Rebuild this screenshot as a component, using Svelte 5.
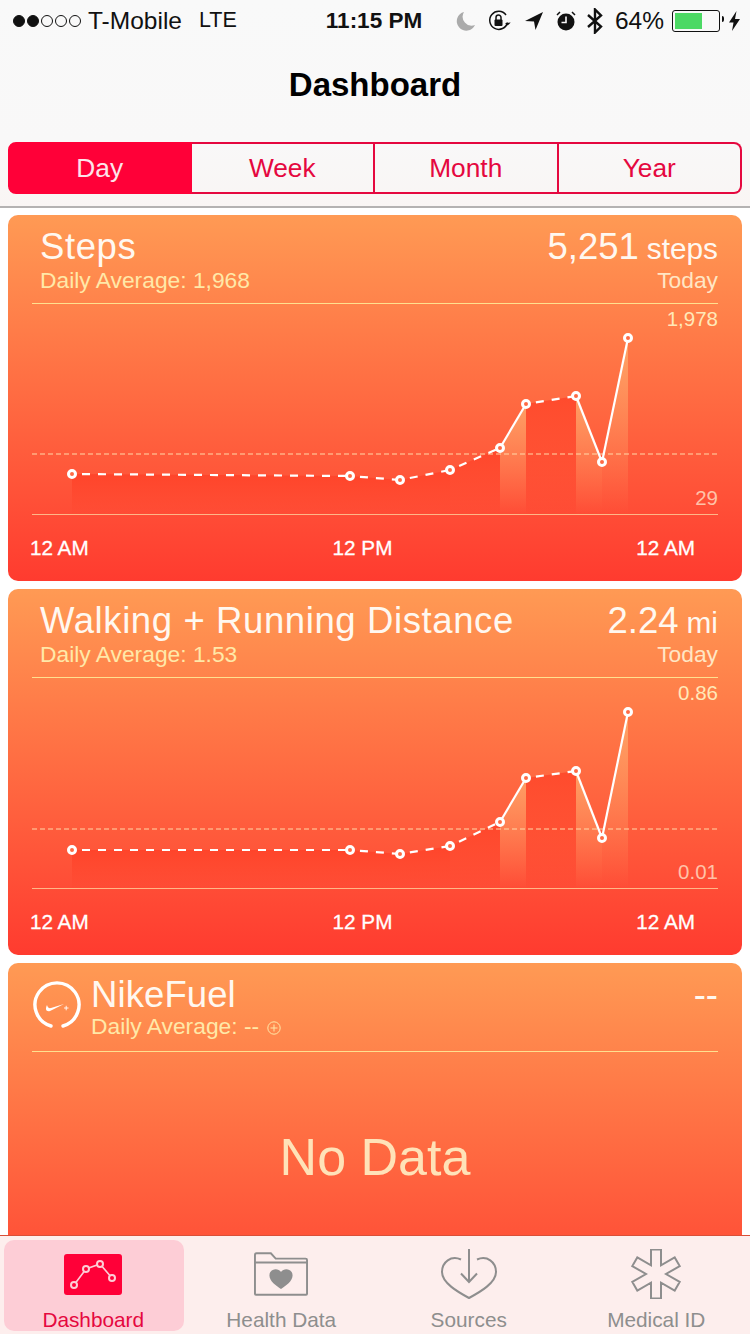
<script>
  const tabs = ['Day', 'Week', 'Month', 'Year']

  const cards = [
    {
      title: 'Steps', avg: '1,968', value: '5,251', unit: 'steps', max: '1,978', min: '29',
      pts: [[40, 171], [318, 173], [368, 177], [418, 167], [468, 145], [494, 101], [544, 93], [570, 159], [596, 35]],
      avgY: 151,
    },
    {
      title: 'Walking + Running Distance', avg: '1.53', value: '2.24', unit: 'mi', max: '0.86', min: '0.01',
      pts: [[40, 173], [318, 173], [368, 177], [418, 169], [468, 145], [494, 101], [544, 94], [570, 161], [596, 35]],
      avgY: 152,
    },
  ]

  // segments drawn with a solid line; the others are dashed
  const solid = [4, 6, 7]
  const base = 211

  const segments = (pts) => pts.slice(0, -1).map((p, i) => ({ a: p, b: pts[i + 1], solid: solid.includes(i) }))
  const area = (s) => `${s.a[0]},${base} ${s.a[0]},${s.a[1]} ${s.b[0]},${s.b[1]} ${s.b[0]},${base}`
</script>

<div class="page">
  <header class="top">
    <div class="status">
      <div class="carrier">
        <span class="dots">
          <i class="on"></i><i class="on"></i><i></i><i></i><i></i>
        </span>
        <span>T-Mobile</span>
        <span class="lte">LTE</span>
      </div>
      <div class="time">11:15 PM</div>
      <div class="sys">
        <svg width="20" height="22" viewBox="0 0 20 22"><path d="M8 2a9.500 9.500 0 1 0 11 13 9 9 0 0 1-11-13z" fill="#ababab" /></svg>
        <svg class="lock" width="24" height="22" viewBox="0 0 24 22" fill="none" stroke="#111" stroke-width="1.500">
          <path d="M19.500 12.500a9 9 0 1 1-1.500-7.500" />
          <path d="M17 13l2.700 2.600 3-3z" fill="#111" stroke="none" />
          <rect x="6.500" y="9.500" width="8" height="6.500" rx="1" fill="#111" stroke="none" />
          <path d="M8 10V7.500a2.500 2.500 0 0 1 5 0V10" />
        </svg>
        <svg class="arrow" width="18" height="19" viewBox="0 0 18 19"><path d="M18 1L0 10l9 .500 1.500 8.500z" fill="#111" /></svg>
        <svg class="alarm" width="20" height="20" viewBox="0 0 20 20">
          <circle cx="10" cy="11" r="8.500" fill="#111" />
          <path d="M10 5.500V11.500H5.500" fill="none" stroke="#f9f8f9" stroke-width="1.600" />
          <path d="M1 4l3-3M19 4l-3-3" stroke="#111" stroke-width="1.500" />
        </svg>
        <svg class="bt" width="16" height="26" viewBox="0 0 16 26" fill="none" stroke="#111" stroke-width="2.400">
          <path d="M1 7l13 11.500L8 24.500V1.500l6 6L1 19" />
        </svg>
        <span class="pct">64%</span>
        <div class="battery"><div class="level"></div></div>
        <svg class="bolt" width="11" height="20" viewBox="0 0 11 20"><path d="M7.500 0L0 11.500h4.500L3 20l8-12H6z" fill="#111" /></svg>
      </div>
    </div>
    <h1>Dashboard</h1>
    <div class="segments">
      {#each tabs as t, i}
        <div class="seg" class:active={i === 0}>{t}</div>
      {/each}
    </div>
  </header>

  <main class="list">
    {#each cards as c}
      <section class="card">
        <div class="head">
          <div class="row">
            <span class="title">{c.title}</span>
            <span class="value">{c.value}<small>{c.unit}</small></span>
          </div>
          <div class="row sub">
            <span>Daily Average: {c.avg}</span>
            <span class="today">Today</span>
          </div>
        </div>
        <div class="chart">
          <svg width="686" height="211" viewBox="0 0 686 211">
            <defs>
              <linearGradient id="lite" x1="0" y1="0" x2="0" y2="1">
                <stop offset="0" stop-color="#ffb070" stop-opacity="0.75" />
                <stop offset="1" stop-color="#ffb070" stop-opacity="0" />
              </linearGradient>
              <linearGradient id="deep" x1="0" y1="0" x2="0" y2="1">
                <stop offset="0" stop-color="#ff3d24" stop-opacity="0.7" />
                <stop offset="1" stop-color="#ff3d24" stop-opacity="0.05" />
              </linearGradient>
            </defs>
            {#each segments(c.pts) as s}
              <polygon points={area(s)} fill={s.solid ? 'url(#lite)' : 'url(#deep)'} />
            {/each}
            <line x1="0" x2="686" y1={c.avgY} y2={c.avgY} stroke="#ffd9a8" stroke-width="1" stroke-dasharray="5 3" />
            {#each segments(c.pts) as s}
              <line x1={s.a[0]} y1={s.a[1]} x2={s.b[0]} y2={s.b[1]} stroke="#fff" stroke-width="2.200" stroke-dasharray={s.solid ? 'none' : '8 8'} stroke-dashoffset="-10" />
            {/each}
            {#each c.pts as p}
              <circle cx={p[0]} cy={p[1]} r="3.500" fill="#ff6a45" stroke="#fff" stroke-width="3" />
            {/each}
          </svg>
          <span class="ymax">{c.max}</span>
          <span class="ymin">{c.min}</span>
        </div>
        <div class="axis"><span>12 AM</span><span>12 PM</span><span>12 AM</span></div>
      </section>
    {/each}

    <section class="card">
      <div class="head nike">
        <svg class="fuel" width="48" height="48" viewBox="0 0 48 48" fill="none">
          <path d="M18 45a22 22 0 1 1 12 0" stroke="#fff" stroke-width="3.400" stroke-linecap="round" />
          <path d="M14 24c-2 4-1 7 3 6l14-7-13 4c-2 .500-3.500-.500-4-3z" fill="#fff" />
          <path d="M31 27h4.500M33.200 24.800v4.500" stroke="#fff" stroke-width="0.900" />
        </svg>
        <div class="grow">
          <div class="row">
            <span class="title">NikeFuel</span>
            <span class="value">--</span>
          </div>
          <div class="row sub">
            <span>
              Daily Average: --<svg class="plus" width="14" height="14" viewBox="0 0 14 14" fill="none" stroke="#ffe8a8" stroke-width="1"><circle cx="7" cy="7" r="6.200" /><path d="M3.500 7h7M7 3.500v7" /></svg>
            </span>
          </div>
        </div>
      </div>
      <div class="nodata">No Data</div>
    </section>
  </main>

  <nav class="tabbar">
    <div class="tab selected">
      <div class="slot">
        <svg width="58" height="41" viewBox="0 0 58 41">
          <rect width="58" height="41" rx="3" fill="#ff0038" />
          <path d="M10 31L22 15 36 10 48 24" fill="none" stroke="#fdcdd6" stroke-width="1.600" />
          <g fill="#ff0038" stroke="#fdcdd6" stroke-width="2">
            <circle cx="10" cy="31" r="3" /><circle cx="22" cy="15" r="3" /><circle cx="36" cy="10" r="3" /><circle cx="48" cy="24" r="3" />
          </g>
        </svg>
      </div>
      <span>Dashboard</span>
    </div>
    <div class="tab">
      <div class="slot">
        <svg width="54" height="45" viewBox="0 0 56 46" fill="none" stroke="#8e8e8e" stroke-width="2">
          <path d="M2 44a1 1 0 0 1-1-1V2.500A1.500 1.500 0 0 1 2.500 1h15l5 5.500h31a1.500 1.500 0 0 1 1.500 1.500v35a1 1 0 0 1-1 1z" />
          <path d="M1 10.500h54" />
          <path d="M28 38c-5-3.500-12-8-12-14 0-7 9-8.500 12-3.500 3-5 12-3.500 12 3.500 0 6-7 10.500-12 14z" fill="#8e8e8e" stroke="none" />
        </svg>
      </div>
      <span>Health Data</span>
    </div>
    <div class="tab">
      <div class="slot">
        <svg width="56" height="50" viewBox="0 0 56 50" fill="none" stroke="#8e8e8e" stroke-width="2">
          <path d="M20 10.500C10 6 1 13 1 23C1 34 17 43 28 49C39 43 55 34 55 23C55 13 46 6 36 10.500" />
          <path d="M28 0v33M20 24.500L28 33l8-8.500" />
        </svg>
      </div>
      <span>Sources</span>
    </div>
    <div class="tab">
      <div class="slot">
        <svg width="52" height="50" viewBox="0 0 52 50" fill="none" stroke="#8e8e8e" stroke-width="2">
          <path d="M21 .500h10v15.840L44.700 8.420l5 8.660L36 25l13.700 7.920-5 8.660L31 33.660V49.500H21V33.660L7.300 41.580l-5-8.660L16 25 2.300 17.080l5-8.660L21 16.340z" />
        </svg>
      </div>
      <span>Medical ID</span>
    </div>
  </nav>
</div>

<style>
  :global(body) {
    margin: 0;
    background: #fff;
  }
  .page {
    position: relative;
    width: 750px;
    height: 1334px;
    overflow: hidden;
    font-family: 'Liberation Sans', Arial, sans-serif;
    color: #111;
  }
  .top {
    height: 206px;
    background: linear-gradient(#f9f9f9, #f9f8f8 70%, #f9f5f4);
    border-bottom: 2px solid #b4b2b2;
    box-sizing: content-box;
  }
  .status {
    display: grid;
    grid-template-columns: 1fr auto 1fr;
    align-items: center;
    height: 40px;
    padding: 1px 10px 0 13px;
    box-sizing: border-box;
    font-size: 24.500px;
  }
  .carrier {
    display: flex;
    align-items: center;
    gap: 7px;
    white-space: nowrap;
  }
  .lte {
    margin-left: 10px;
    font-size: 21.500px;
  }
  .dots {
    display: flex;
    gap: 2px;
  }
  .dots i {
    width: 10px;
    height: 10px;
    border: 1px solid #111;
    border-radius: 50%;
  }
  .dots i.on {
    background: #111;
  }
  .time {
    font-weight: 700;
    font-size: 22.500px;
    margin-right: 5px;
  }
  .sys {
    display: flex;
    align-items: center;
    justify-content: flex-end;
    white-space: nowrap;
  }
  .lock { margin-left: 12px; }
  .arrow { margin-left: 13px; }
  .alarm { margin-left: 13px; }
  .bt { margin-left: 11px; }
  .pct { margin-left: 12px; font-size: 24.500px; }
  .battery {
    position: relative;
    width: 42px;
    height: 16px;
    margin-left: 8px;
    padding: 2px;
    border: 1px solid #111;
    border-radius: 3px;
  }
  .battery::after {
    content: '';
    position: absolute;
    right: -5px;
    top: 5px;
    width: 2px;
    height: 6px;
    background: #111;
    border-radius: 0 2px 2px 0;
  }
  .level {
    width: 64%;
    height: 100%;
    background: #4cd964;
  }
  .bolt { margin-left: 9px; }
  h1 {
    margin: 0;
    height: 102px;
    padding-top: 25px;
    box-sizing: border-box;
    line-height: 40px;
    text-align: center;
    font-size: 33px;
    font-weight: 700;
    color: #000;
  }
  .segments {
    display: grid;
    grid-template-columns: repeat(4, 1fr);
    height: 52px;
    margin: 0 8px;
  }
  .seg {
    display: flex;
    align-items: center;
    justify-content: center;
    font-size: 26.300px;
    color: #e5083f;
    border: 2px solid #e5083f;
    border-left: 0;
  }
  .seg:first-child {
    border-left: 2px solid #e5083f;
    border-radius: 8px 0 0 8px;
  }
  .seg:last-child {
    border-radius: 0 8px 8px 0;
  }
  .seg.active {
    background: #ff0038;
    border-color: #ff0038;
    color: #fde4ea;
  }
  .list {
    display: flex;
    flex-direction: column;
    gap: 8px;
    padding: 7px 8px 0;
  }
  .card {
    position: relative;
    height: 366px;
    flex: none;
    border-radius: 10px;
    padding: 0 24px;
    box-sizing: border-box;
    background: linear-gradient(#ff9a54, #ff3b2f);
    color: #fff;
  }
  .head {
    height: 89px;
    box-sizing: border-box;
    padding: 12px 0 0 8px;
    border-bottom: 1px solid #ffe08f;
  }
  .row {
    display: flex;
    justify-content: space-between;
    align-items: baseline;
    white-space: nowrap;
  }
  .title,
  .value {
    font-size: 36.500px;
    line-height: 40px;
    color: #fff8f0;
  }
  .title {
    letter-spacing: 0.6px;
  }
  .nike .title {
    letter-spacing: 0.1px;
  }
  .value small {
    margin-left: 8px;
    font-size: 29.800px;
  }
  .sub {
    font-size: 22.800px;
    line-height: 24px;
    margin-top: -1px;
    color: #ffe8a8;
  }
  .today {
    color: #ffe6c4;
  }
  .chart {
    position: relative;
    height: 211px;
    margin-top: -1px;
    border-bottom: 1px solid #ffb787;
  }
  .chart svg {
    display: block;
  }
  .ymax,
  .ymin {
    position: absolute;
    right: 0;
    font-size: 20.500px;
    line-height: 24px;
  }
  .ymax {
    top: 4px;
    color: #ffe8b8;
  }
  .ymin {
    top: 183px;
    color: #ffc2a8;
  }
  .axis {
    display: flex;
    justify-content: space-between;
    margin: 21px 23px 0 -2px;
    font-size: 20.700px;
    line-height: 24px;
    color: #fff;
    -webkit-text-stroke: 0.3px #fff;
  }
  .nike {
    display: flex;
    align-items: flex-start;
    gap: 10px;
    padding-left: 0;
  }
  .fuel {
    margin: 6px 0 0 1px;
    flex: none;
  }
  .grow {
    flex: 1;
  }
  .plus {
    margin-left: 8px;
    vertical-align: -1px;
  }
  .nodata {
    margin-top: 75px;
    text-align: center;
    font-size: 52px;
    line-height: 60px;
    color: #ffe2b8;
  }
  .tabbar {
    position: absolute;
    left: 0;
    right: 0;
    bottom: 0;
    height: 99px;
    box-sizing: border-box;
    display: grid;
    grid-template-columns: repeat(4, 1fr);
    padding: 4px 0;
    background: #fdeeed;
    border-top: 1px solid #d94f38;
  }
  .tab {
    display: flex;
    flex-direction: column;
    align-items: center;
    padding-top: 9px;
    font-size: 20.800px;
    line-height: 22px;
    color: #8e8e8e;
    white-space: nowrap;
  }
  .slot {
    display: flex;
    align-items: center;
    justify-content: center;
    height: 50px;
    margin-bottom: 10px;
  }
  .tab.selected {
    background: #fdcdd6;
    border-radius: 10px;
    margin: 0 3.500px 0 4px;
    padding-right: 1.500px;
    color: #e5083f;
  }
  .tab svg {
    display: block;
  }
</style>
